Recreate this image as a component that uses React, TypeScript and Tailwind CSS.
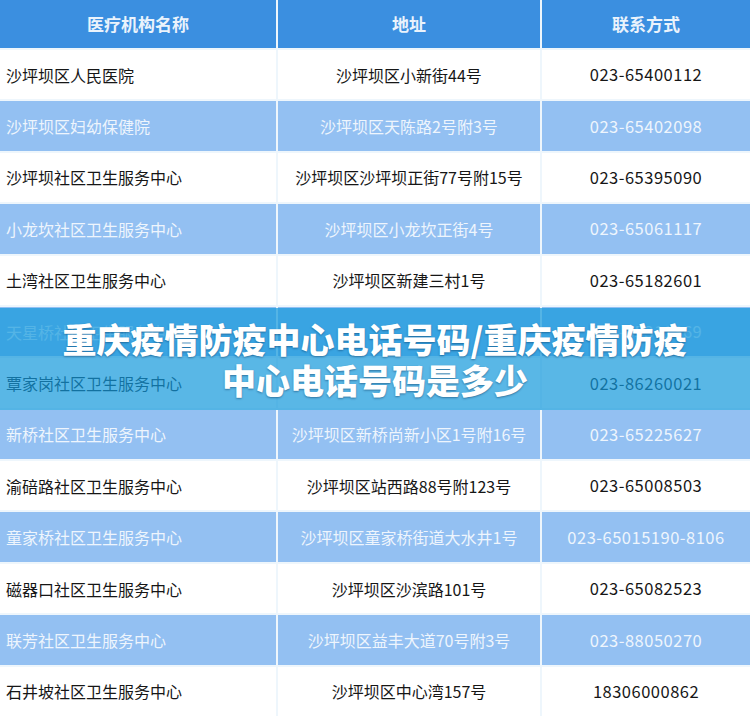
const rows: [string, string, string][] = [
  ['沙坪坝区人民医院', '沙坪坝区小新街44号', '023-65400112'],
  ['沙坪坝区妇幼保健院', '沙坪坝区天陈路2号附3号', '023-65402098'],
  ['沙坪坝社区卫生服务中心', '沙坪坝区沙坪坝正街77号附15号', '023-65395090'],
  ['小龙坎社区卫生服务中心', '沙坪坝区小龙坎正街4号', '023-65061117'],
  ['土湾社区卫生服务中心', '沙坪坝区新建三村1号', '023-65182601'],
  ['天星桥社区卫生服务中心', '', '023-65311369'],
  ['覃家岗社区卫生服务中心', '', '023-86260021'],
  ['新桥社区卫生服务中心', '沙坪坝区新桥尚新小区1号附16号', '023-65225627'],
  ['渝碚路社区卫生服务中心', '沙坪坝区站西路88号附123号', '023-65008503'],
  ['童家桥社区卫生服务中心', '沙坪坝区童家桥街道大水井1号', '023-65015190-8106'],
  ['磁器口社区卫生服务中心', '沙坪坝区沙滨路101号', '023-65082523'],
  ['联芳社区卫生服务中心', '沙坪坝区益丰大道70号附3号', '023-88050270'],
  ['石井坡社区卫生服务中心', '沙坪坝区中心湾157号', '18306000862'],
];

export default function App() {
  return (
    <div
      className="relative h-[716px] w-[750px] overflow-hidden bg-white"
      style={{ fontFamily: '"Noto Sans CJK SC", "Noto Sans", sans-serif' }}
    >
      <div className="grid h-full grid-cols-[276px_262px_1fr] grid-rows-[48px_repeat(13,1fr)] gap-[2px] bg-[#eef6fc]">
        {['医疗机构名称', '地址', '联系方式'].map((h) => (
          <div
            key={h}
            className="flex items-center justify-center bg-[#3b8fe0] text-[17px] font-bold text-[#eaf3fc]"
          >
            {h}
          </div>
        ))}
        {rows.map(([name, addr, tel], i) => {
          const blue = i % 2 === 1;
          const cell = blue
            ? 'bg-[#93c0f2] text-[#eef5fd]'
            : 'bg-white text-[#161616]';
          return [
            <div key={`${i}a`} className={`flex items-center pl-[6px] text-[16px] ${cell}`}>
              {name}
            </div>,
            <div key={`${i}b`} className={`flex items-center justify-center text-[16px] ${cell}`}>
              {addr}
            </div>,
            <div key={`${i}c`} className={`flex items-center justify-center text-[16.5px] tracking-[0.5px] ${cell}`}>
              {tel}
            </div>,
          ];
        })}
      </div>

      <div className="absolute left-0 right-0 top-[308px] flex h-[102px] flex-col items-center justify-center bg-[rgba(19,153,219,0.7)] leading-[41px]">
        <p className="text-[34px] font-black text-white [text-shadow:0_1px_2px_rgba(0,40,80,0.45)]">
          重庆疫情防疫中心电话号码/重庆疫情防疫
        </p>
        <p className="text-[34px] font-black text-white [text-shadow:0_1px_2px_rgba(0,40,80,0.45)]">
          中心电话号码是多少
        </p>
      </div>
    </div>
  );
}
